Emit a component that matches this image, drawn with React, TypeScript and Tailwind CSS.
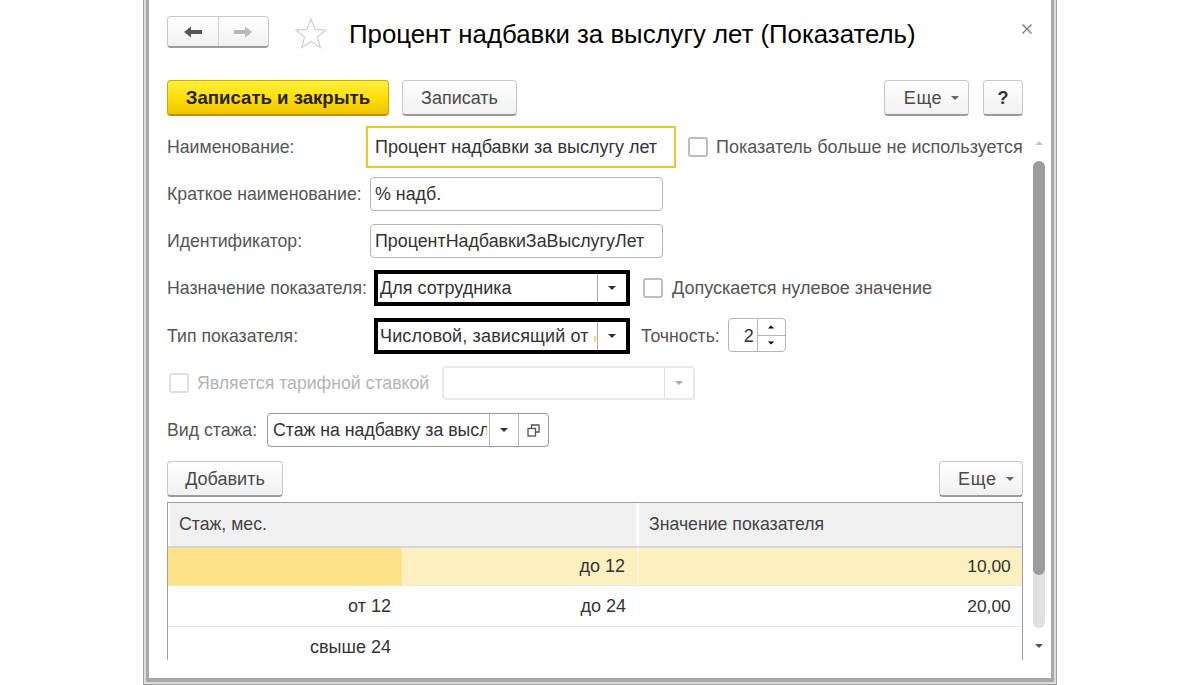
import React from "react";

const Caret = ({ className = "border-t-[#333]" }: { className?: string }) => (
  <span className={`block w-0 h-0 border-x-[4px] border-x-transparent border-t-[4px] ${className}`} />
);

const Button = ({ children, className = "" }: { children: React.ReactNode; className?: string }) => (
  <div
    className={`flex items-center justify-center rounded-[4px] border border-[#c8c8c8] border-b-2 border-b-[#9a9a9a] bg-gradient-to-b from-white to-[#f1f1f1] pt-[1px] text-[18px] text-[#4a4a4a] ${className}`}
  >
    {children}
  </div>
);

const Checkbox = ({ disabled }: { disabled?: boolean }) => (
  <span className={`block w-[20px] h-[20px] rounded-[3px] border-2 bg-white ${disabled ? "border-[#e0e0e0]" : "border-[#bdbdbd]"}`} />
);

const Label = ({ children, className = "" }: { children: React.ReactNode; className?: string }) => (
  <span className={`pt-[1px] text-[17.7px] text-[#555] whitespace-nowrap ${className}`}>{children}</span>
);

const Field = ({ children, className = "" }: { children: React.ReactNode; className?: string }) => (
  <div className={`flex items-center h-[34px] rounded-[4px] border border-[#b5b5b5] bg-white pl-[4px] pt-[1px] text-[17.85px] text-[#333] whitespace-nowrap ${className}`}>
    {children}
  </div>
);

const SelectBox = ({ children }: { children: React.ReactNode }) => (
  <div className="flex items-stretch w-[256px] h-[36px] border-[4px] border-black bg-white text-[18px] text-[#333]">
    <div className="flex-1 overflow-hidden whitespace-nowrap pl-[2px] leading-[29px]">{children}</div>
    <div className="flex items-center justify-center w-[29px] border-l border-[#aaa]">
      <Caret />
    </div>
  </div>
);

const App = () => {
  return (
    <div className="h-[685px] w-[1200px] overflow-hidden bg-white flex justify-center font-['Liberation_Sans',Arial,sans-serif]">
      <div className="w-[914px] h-[685px] border-x border-b border-[#a0a0a0]">
        <div className="h-[684px] border-x-2 border-b-2 border-[#dcdcdc]">
          <div className="h-[682px] border-x-[3px] border-b-[4px] border-[#a8a8a8] bg-white pl-[18px] pr-[8px] pt-[16px]">
            {/* header */}
            <div className="flex items-center h-[32px]">
              <div className="flex w-[102px] h-[32px] rounded-[4px] border border-[#c8c8c8] border-b-2 border-b-[#9a9a9a] bg-gradient-to-b from-white to-[#f1f1f1]">
                <div className="flex-1 flex items-center justify-center border-r border-[#d0d0d0]">
                  <svg width="20" height="14" viewBox="0 0 20 14">
                    <path d="M1 7 L8 1.5 V5 H19 V9 H8 V12.5 Z" fill="#555" />
                  </svg>
                </div>
                <div className="flex-1 flex items-center justify-center">
                  <svg width="20" height="14" viewBox="0 0 20 14">
                    <path d="M19 7 L12 1.5 V5 H1 V9 H12 V12.5 Z" fill="#b8b8b8" />
                  </svg>
                </div>
              </div>
              <svg className="ml-[25px] mt-[1px]" width="34" height="32" viewBox="0 0 34 32">
                <path
                  d="M17 2 L21 12.4 L32 13 L23.4 20 L26.3 30.5 L17 24.5 L7.7 30.5 L10.6 20 L2 13 L13 12.4 Z"
                  fill="none"
                  stroke="#d2d2d2"
                  strokeWidth="1.3"
                />
              </svg>
              <h1 className="ml-[21px] mt-[6px] text-[25.8px] leading-none text-black whitespace-nowrap">
                Процент надбавки за выслугу лет (Показатель)
              </h1>
              <svg className="ml-auto mr-[10px] -mt-[6px]" width="12" height="12" viewBox="0 0 12 12">
                <path d="M1.5 1.5 L10.5 10.5 M10.5 1.5 L1.5 10.5" stroke="#777" strokeWidth="1.3" />
              </svg>
            </div>

            {/* command bar */}
            <div className="flex items-stretch h-[36px] mt-[32px] w-[856px]">
              <div className="flex items-center justify-center w-[222px] rounded-[4px] border border-[#cfa800] border-b-2 border-b-[#b89600] bg-gradient-to-b from-[#fff03a] via-[#ffdf00] to-[#efc400] pt-[1px] text-[18.6px] font-bold text-[#222]">
                Записать и закрыть
              </div>
              <Button className="w-[115px] ml-[13px]">Записать</Button>
              <Button className="w-[85px] ml-auto gap-[9px] pl-[10px]">
                <span className="tracking-[0.6px]">Еще</span> <Caret className="border-t-[#666]" />
              </Button>
              <Button className="w-[40px] ml-[14px] font-bold text-[#333]">?</Button>
            </div>

            {/* form and scrollbar */}
            <div className="flex mt-[10px]">
              <div className="w-[857px]">
                <div className="flex items-center h-[42px]">
                  <Label className="w-[199px]">Наименование:</Label>
                  <div className="flex items-center w-[310px] h-[42px] border-2 border-[#f2c526] bg-white pl-[7px] text-[18px] text-[#333] whitespace-nowrap">
                    Процент надбавки за выслугу лет
                  </div>
                  <span className="ml-[12px]"><Checkbox /></span>
                  <Label className="ml-[8px] text-[18px]">Показатель больше не используется</Label>
                </div>

                <div className="flex items-center mt-[9px]">
                  <Label className="w-[203px]">Краткое наименование:</Label>
                  <Field className="w-[293px]">% надб.</Field>
                </div>

                <div className="flex items-center mt-[13px]">
                  <Label className="w-[203px]">Идентификатор:</Label>
                  <Field className="w-[293px]">ПроцентНадбавкиЗаВыслугуЛет</Field>
                </div>

                <div className="flex items-center mt-[12px]">
                  <Label className="w-[207px]">Назначение показателя:</Label>
                  <SelectBox>Для сотрудника</SelectBox>
                  <span className="ml-[13px]"><Checkbox /></span>
                  <Label className="ml-[9px] text-[18px]">Допускается нулевое значение</Label>
                </div>

                <div className="flex items-center mt-[12px]">
                  <Label className="w-[207px]">Тип показателя:</Label>
                  <SelectBox>
                    <span className="tracking-[0.14px]">Числовой, зависящий от</span>
                    <span className="inline-block ml-[5px] w-[2px] h-[6px] bg-[#f5d77a]" />
                  </SelectBox>
                  <Label className="ml-[11px]">Точность:</Label>
                  <div className="flex ml-[8px] -mt-[2px] w-[58px] h-[34px] rounded-[4px] border border-[#b5b5b5] bg-white">
                    <div className="w-[28px] text-right pr-[3px] text-[18px] leading-[34px] text-[#333]">2</div>
                    <div className="flex-1 flex flex-col border-l border-[#b5b5b5]">
                      <div className="flex-1 flex items-center justify-center border-b border-[#b5b5b5]">
                        <Caret className="rotate-180 scale-75" />
                      </div>
                      <div className="flex-1 flex items-center justify-center">
                        <Caret className="scale-75" />
                      </div>
                    </div>
                  </div>
                </div>

                <div className="flex items-center mt-[12px]">
                  <span className="ml-[2px]"><Checkbox disabled /></span>
                  <Label className="ml-[8px] text-[#b4b4b4]">Является тарифной ставкой</Label>
                  <div className="flex ml-[13px] w-[253px] h-[34px] rounded-[4px] border-2 border-[#e8e8e8] bg-white">
                    <div className="flex-1" />
                    <div className="flex items-center justify-center w-[29px] border-l border-[#e0e0e0]">
                      <Caret className="border-t-[#aaa]" />
                    </div>
                  </div>
                </div>

                <div className="flex items-center mt-[13px]">
                  <Label className="w-[100px]">Вид стажа:</Label>
                  <div className="flex w-[282px] h-[34px] rounded-[4px] border border-[#999] bg-white text-[17.7px] text-[#333]">
                    <div className="w-[221px] pl-[5px] pr-[2px]">
                      <div className="overflow-hidden whitespace-nowrap leading-[33px]">Стаж на надбавку за высл</div>
                    </div>
                    <div className="flex items-center justify-center w-[29px] border-l border-[#b5b5b5]">
                      <Caret />
                    </div>
                    <div className="flex items-center justify-center flex-1 border-l border-[#b5b5b5]">
                      <svg width="13" height="13" viewBox="0 0 13 13" fill="none" stroke="#555" strokeWidth="1.3">
                        <path d="M4.5 4 V1 H12 V8 H9" />
                        <rect x="1" y="4.5" width="7.5" height="7.5" />
                      </svg>
                    </div>
                  </div>
                </div>

                <div className="flex justify-between mt-[14px]">
                  <Button className="w-[116px] h-[36px]">Добавить</Button>
                  <Button className="w-[84px] h-[36px] gap-[9px] pl-[10px]">
                    <span className="tracking-[0.6px]">Еще</span> <Caret className="border-t-[#666]" />
                  </Button>
                </div>

                {/* table */}
                <div className="mt-[5px] h-[158px] border-x border-t border-[#9f9f9f] overflow-hidden text-[17.7px] text-[#444]">
                  <div className="flex h-[45px] border-b-2 border-[#d6d6d6] bg-white">
                    <div className="flex items-center w-[466px] ml-[2px] pl-[9px] bg-[#f0f0f0]">Стаж, мес.</div>
                    <div className="flex items-center flex-1 ml-[3px] pl-[10px] bg-[#f0f0f0]">Значение показателя</div>
                  </div>
                  <div className="flex h-[38px] border-b border-[#e6e6e6] bg-[#fdf0c0] text-[18px]">
                    <div className="w-[234px] bg-[#fde28a]" />
                    <div className="flex items-center justify-end w-[235px] pr-[12px] border-l border-[#fff6da] text-[#333]">до 12</div>
                    <div className="flex items-center justify-end flex-1 pr-[11px] border-l-2 border-[#fff6da] text-[#333] text-[17.4px]">10,00</div>
                  </div>
                  <div className="flex h-[41px] border-b border-[#e8e8e8] text-[#333] text-[18px]">
                    <div className="flex items-center justify-end w-[223px]">от 12</div>
                    <div className="flex items-center justify-end w-[235px]">до 24</div>
                    <div className="flex items-center justify-end flex-1 pr-[11px] text-[17.4px]">20,00</div>
                  </div>
                  <div className="flex h-[40px] text-[#333] text-[18px]">
                    <div className="flex items-center justify-end w-[223px]">свыше 24</div>
                  </div>
                </div>
              </div>

              {/* scrollbar */}
              <div className="flex flex-col items-center w-[12px] ml-[10px] pt-[15px]">
                <Caret className="rotate-180 border-t-[#c8c8c8]" />
                <div className="mt-[16px] w-[12px] h-[467px] rounded-full bg-[#e0e0e0]">
                  <div className="w-[12px] h-[414px] rounded-full bg-[#9c9c9c]" />
                </div>
                <div className="mt-[16px]"><Caret className="border-t-[#555]" /></div>
              </div>
            </div>
          </div>
        </div>
      </div>
    </div>
  );
};

export default App;
